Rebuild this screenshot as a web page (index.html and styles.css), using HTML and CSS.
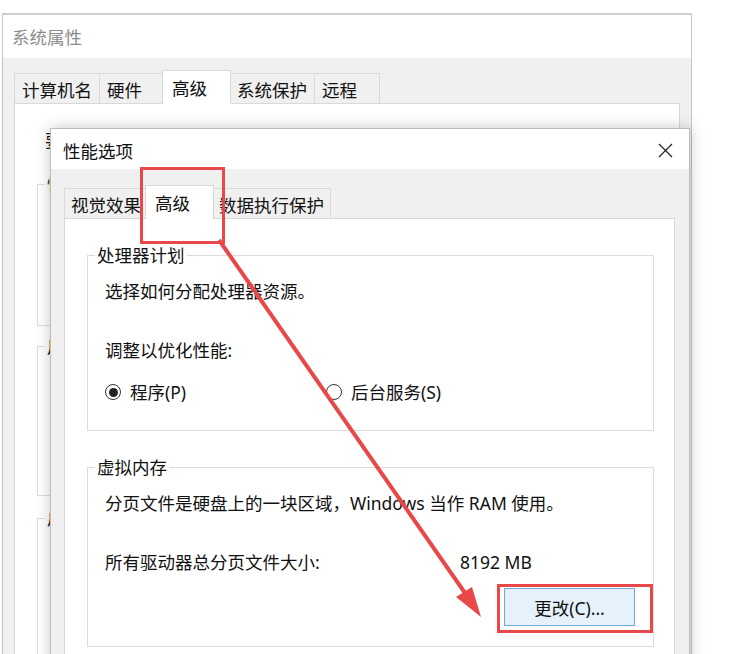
FILE: index.html
```html
<!DOCTYPE html>
<html lang="zh-CN">
<head>
  <meta charset="UTF-8" />
  <title>性能选项</title>
  <link rel="stylesheet" href="styles.css">
</head>
<body>
  <div class="win sys">
    <div class="titlebar"><span class="title">系统属性</span></div>
    <div class="win-body">
      <div class="tabs">
        <div class="tab">计算机名</div>
        <div class="tab">硬件</div>
        <div class="tab active">高级</div>
        <div class="tab">系统保护</div>
        <div class="tab">远程</div>
      </div>
      <div class="panel sys-panel">
        <p class="note">要进行大多数更改，你必须作为管理员登录。</p>
        <fieldset class="group g-perf"><legend>性能</legend></fieldset>
        <fieldset class="group g-profile"><legend>用户配置文件</legend></fieldset>
        <fieldset class="group g-startup"><legend>启动和故障恢复</legend></fieldset>
      </div>
    </div>
  </div>

  <div class="win dialog">
    <div class="titlebar dlg-title">
      <span class="title">性能选项</span>
      <svg class="close" width="15" height="15" viewBox="0 0 15 15">
        <path d="M1 1 L14 14 M14 1 L1 14" stroke="#222" stroke-width="1.2" fill="none"/>
      </svg>
    </div>
    <div class="win-body dlg-body">
      <div class="tabs">
        <div class="tab">视觉效果</div>
        <div class="tab active">高级</div>
        <div class="tab">数据执行保护</div>
      </div>
      <div class="panel dlg-panel">
        <fieldset class="group cpu">
          <legend>处理器计划</legend>
          <p class="line">选择如何分配处理器资源。</p>
          <p class="line gap">调整以优化性能:</p>
          <div class="radios">
            <label class="radio"><span class="dot checked"></span>程序(P)</label>
            <label class="radio"><span class="dot"></span>后台服务(S)</label>
          </div>
        </fieldset>

        <fieldset class="group vmem">
          <legend>虚拟内存</legend>
          <p class="line">分页文件是硬盘上的一块区域，Windows 当作 RAM 使用。</p>
          <div class="line gap size-row">
            <span class="size-label">所有驱动器总分页文件大小:</span>
            <span>8192 MB</span>
          </div>
          <div class="btn-row">
            <button class="change-btn">更改(C)...</button>
          </div>
        </fieldset>
      </div>
    </div>
  </div>

  <svg class="marks" width="744" height="654" viewBox="0 0 744 654">
    <rect x="141.5" y="168.5" width="82" height="74" fill="none" stroke="#e84848" stroke-width="3"/>
    <rect x="498.5" y="585.5" width="153" height="46" fill="none" stroke="#e84848" stroke-width="3"/>
    <line x1="219" y1="240" x2="465" y2="593" stroke="#e84848" stroke-width="4"/>
    <polygon points="481,617 472,587 456,597" fill="#e84848"/>
  </svg>
</body>
</html>
```

FILE: styles.css
```css
html, body {
  height: 654px;
  overflow: hidden;
}
body {
  margin: 0;
  background: #fff;
  position: relative;
  font-family: "Noto Sans", "Noto Sans CJK SC", sans-serif;
  font-size: 17.5px;
  color: #111;
}
p {
  margin: 0;
}

/* windows */
.win {
  box-sizing: border-box;
  background: #f0f0f0;
}
.sys {
  margin: 13px 0 0 2px;
  width: 690px;
  height: 660px;
  border: 1px solid #c4c4c4;
  border-top: 2px solid #cfcfcf;
  border-bottom: none;
}
.titlebar {
  background: #fff;
  height: 43px;
  line-height: 44px;
  padding-left: 9px;
}
.sys .title {
  color: #8c8c8c;
}
.win-body {
  padding: 12px 11px 0 11px;
}

/* tabs */
.tabs {
  display: flex;
  align-items: flex-end;
  position: relative;
  z-index: 1;
  margin-bottom: -1px;
}
.tab {
  box-sizing: border-box;
  height: 30px;
  min-width: 66px;
  line-height: 28px;
  padding: 2px 7px 0 7px;
  margin-bottom: 1px;
  border: 1px solid #d9d9d9;
  border-bottom: none;
  margin-right: -1px;
  background: #f0f0f0;
  white-space: nowrap;
}
.tab.active {
  height: 34px;
  min-width: 69px;
  padding: 3px 9px 0 9px;
  margin: 0 -2px 0 -2px;
  background: #fff;
  position: relative;
  z-index: 2;
}

.panel {
  background: #fff;
  border: 1px solid #d9d9d9;
}
.sys-panel {
  height: 560px;
  padding: 25px 0 0 22px;
}
.note {
  line-height: 22px;
  margin-left: 8px;
  white-space: nowrap;
}

/* group boxes */
.group {
  box-sizing: border-box;
  margin: 0;
  min-width: 0;
  border: 1px solid #dcdcdc;
  padding: 14px 18px 20px 17px;
}
.group legend {
  padding: 0 2px;
  margin-left: -10px;
  line-height: 22px;
}
.g-perf {
  margin-top: 22px;
  height: 153px;
  width: 640px;
}
.g-profile {
  margin-top: 9px;
  height: 161px;
  width: 640px;
}
.g-startup {
  margin-top: 11px;
  height: 200px;
  width: 640px;
}

/* dialog */
.dialog {
  position: absolute;
  left: 50px;
  top: 128px;
  width: 640px;
  height: 560px;
  border: 1px solid #bdbdbd;
  box-shadow: 0 0 14px rgba(0, 0, 0, 0.22);
}
.dlg-title {
  height: 40px;
  line-height: 35px;
  padding: 5px 0 0 12px;
  box-sizing: border-box;
  display: flex;
  align-items: center;
  justify-content: space-between;
}
.dlg-title .title {
  color: #111;
}
.close {
  margin-right: 16px;
  margin-top: -3px;
}
.dlg-body {
  padding: 16px 14px 0 13px;
}
.dlg-body .tab {
  padding-left: 6px;
  padding-right: 6px;
}
.dlg-body .tab.active {
  padding-left: 9px;
}
.dlg-panel {
  height: 480px;
  padding: 25px 20px 0 22px;
}
.line {
  line-height: 22px;
  white-space: nowrap;
}
.line.gap {
  margin-top: 37px;
}
.cpu {
  padding-bottom: 27px;
}
.radios {
  display: grid;
  grid-template-columns: 221px auto;
  margin-top: 20px;
  line-height: 22px;
}
.radio {
  display: flex;
  align-items: center;
  gap: 9px;
}
.dot {
  box-sizing: border-box;
  width: 16px;
  height: 16px;
  border: 1.5px solid #333;
  border-radius: 50%;
  display: flex;
  align-items: center;
  justify-content: center;
}
.dot.checked::after {
  content: "";
  width: 9px;
  height: 9px;
  border-radius: 50%;
  background: #222;
}
.vmem {
  margin-top: 25px;
}
.size-row {
  display: flex;
}
.size-label {
  width: 355px;
}
.btn-row {
  display: flex;
  justify-content: flex-end;
  margin-top: 15px;
}
.change-btn {
  width: 131px;
  height: 38px;
  background: #e5f1fb;
  border: 1px solid #6fa9df;
  font-family: inherit;
  font-size: 17.5px;
  color: #111;
  padding: 0;
}

.marks {
  position: absolute;
  left: 0;
  top: 0;
  pointer-events: none;
  z-index: 5;
}
```
